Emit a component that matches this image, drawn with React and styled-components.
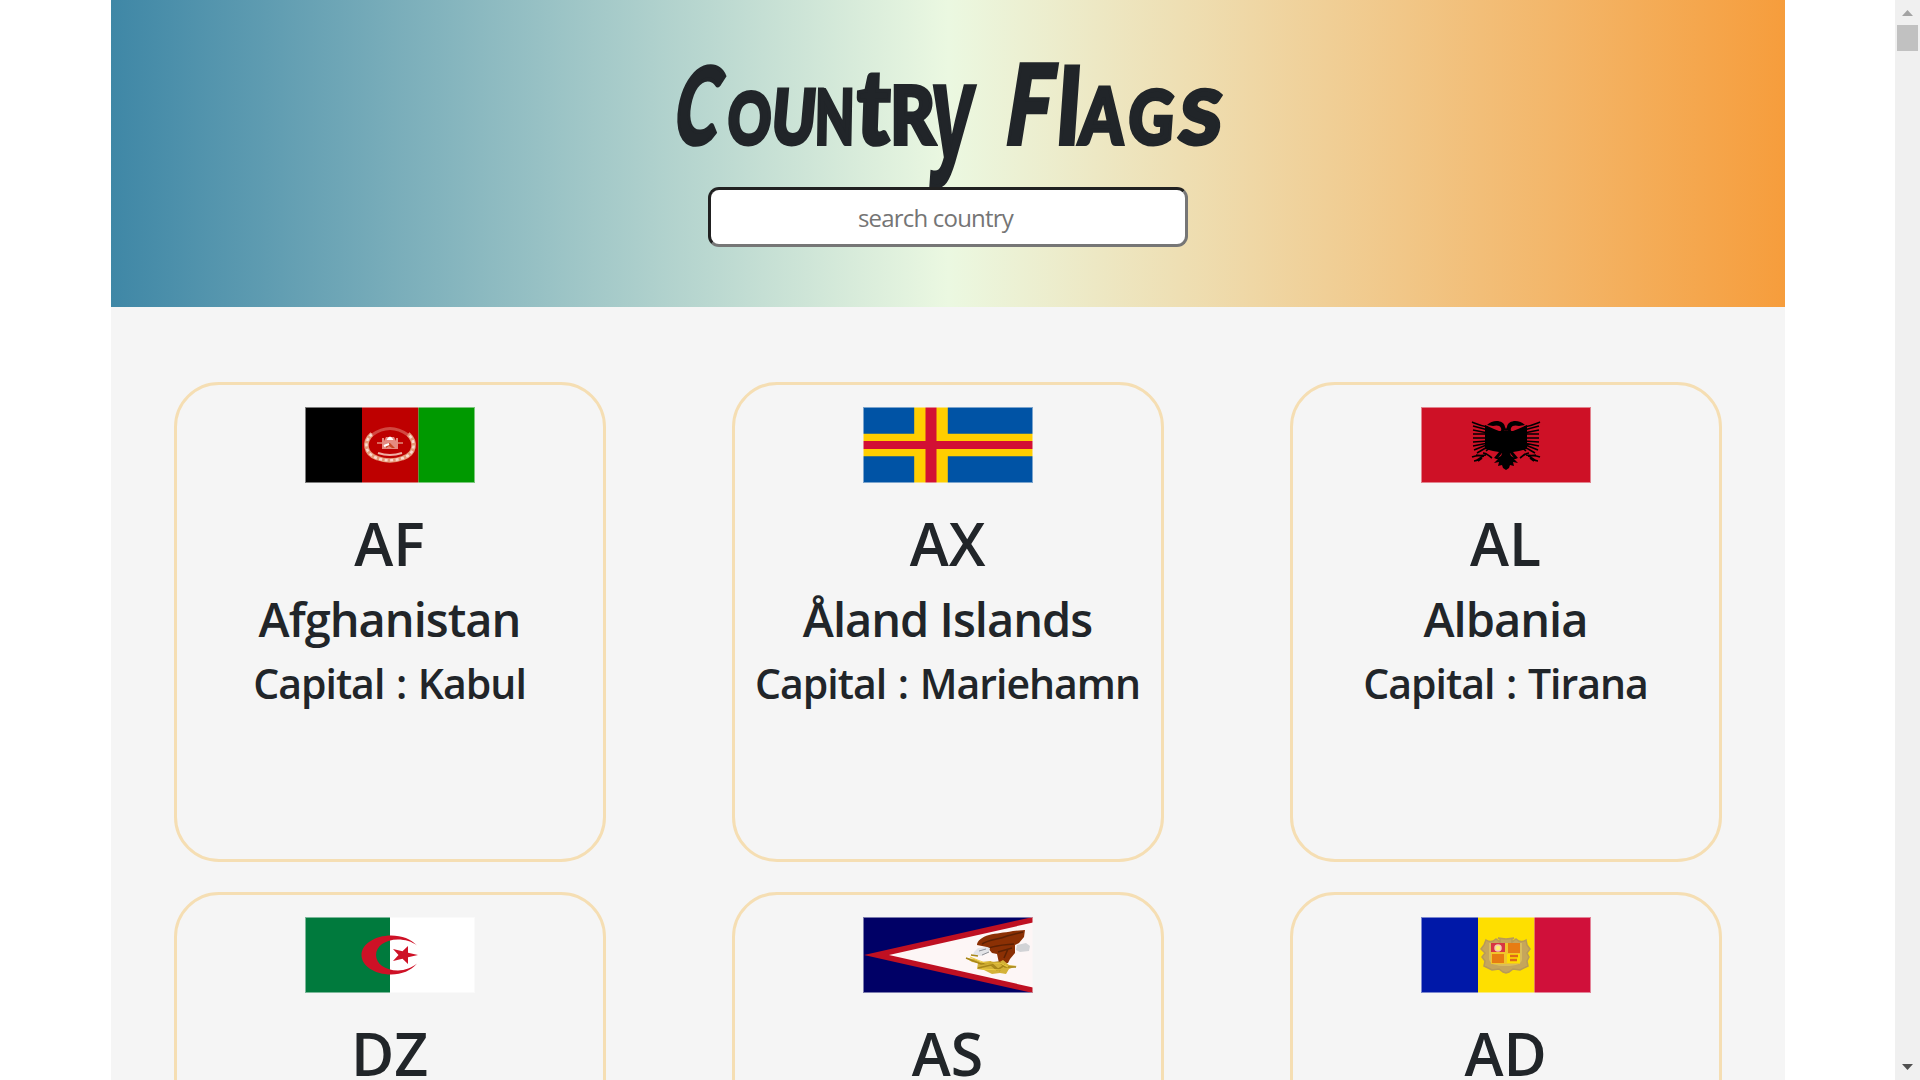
import React from "react";
import styled, { createGlobalStyle } from "styled-components";

const GlobalStyle = createGlobalStyle`
  * { box-sizing: border-box; }
  html, body { margin: 0; padding: 0; overflow: hidden; background: #fff; }
  body { color: #212529; font-family: "Open Sans", "Noto Sans", sans-serif; }
`;

const Page = styled.div`
  display: flex;
  width: 100%;
  height: 1080px;
  overflow: hidden;
`;

const Viewport = styled.main`
  flex: 1;
  display: flex;
  justify-content: center;
  min-width: 0;
`;

const Container = styled.div`
  width: 1674px;
  height: 1080px;
  overflow: hidden;
  background: #f5f5f5;
`;

const Header = styled.header`
  display: flex;
  flex-direction: column;
  align-items: center;
  height: 307px;
  background: linear-gradient(to right, #3f87a6, #ebf8e1, #f69d3c);
`;

const Title = styled.h1`
  display: flex;
  align-items: baseline;
  justify-content: flex-start;
  width: 545px;
  height: 147px;
  margin: 40px 0 0 5px;
  padding-top: 20px;
  font-family: "Lato", sans-serif;
  font-weight: 900;
  line-height: 75px;
  white-space: pre;
`;

const Letter = styled.span`
  display: flex;
  justify-content: center;
  flex: none;
  width: ${(p) => p.$width}px;
  font-family: ${(p) => (p.$hooked ? '"Liberation Sans"' : '"Lato"')}, sans-serif;
  font-size: ${(p) => p.$size}px;
  text-transform: ${(p) => (p.$upper ? "uppercase" : "none")};
  transform: translate(${(p) => p.$shift || 0}px, ${(p) => p.$drop || 0}px) rotate(${(p) => p.$tilt || 0}deg)
    skewX(${(p) => p.$lean}deg) scaleX(${(p) => p.$stretch});
  transform-origin: 50% 70%;
  -webkit-text-stroke: 4px #212529;
`;

const SearchInput = styled.input`
  position: relative;
  width: 480px;
  height: 60px;
  padding: 0 24px 0 0;
  border: 3px solid #767676;
  border-color: #212121 #767676 #767676 #212121;
  border-radius: 11px;
  background: #fff;
  font: 400 24px "Open Sans", "Noto Sans", sans-serif;
  letter-spacing: -0.8px;
  text-align: center;
  outline: none;
  &::placeholder { color: #757575; opacity: 1; }
`;

const Grid = styled.section`
  display: grid;
  grid-template-columns: repeat(3, 558px);
  row-gap: 30px;
  justify-items: center;
  padding-top: 75px;
`;

const Card = styled.article`
  display: flex;
  flex-direction: column;
  align-items: center;
  width: 432px;
  height: 480px;
  padding-top: 22px;
  border: 3px solid #f5deb3;
  border-radius: 45px;
`;

const Flag = styled.svg`
  display: block;
  width: 170px;
  height: 76px;
  margin-bottom: 30px;
`;

const Code = styled.h1`
  margin: 0 0 19px;
  font-size: 59px;
  font-weight: 600;
  line-height: 60px;
`;

const Name = styled.h2`
  margin: 0 0 14px;
  font-size: 47px;
  font-weight: 600;
  line-height: 54px;
  letter-spacing: -1px;
  white-space: nowrap;
`;

const Capital = styled.h3`
  margin: 0;
  font-size: 41px;
  font-weight: 600;
  line-height: 46px;
  letter-spacing: -1px;
  word-spacing: 2px;
  white-space: nowrap;
`;

const Scrollbar = styled.aside`
  display: flex;
  flex-direction: column;
  align-items: center;
  justify-content: space-between;
  width: 25px;
  height: 1080px;
  background: #f0f0f0;
`;

const Track = styled.div`
  flex: 1;
  width: 21px;
`;

const Thumb = styled.div`
  height: 26px;
  background: #c1c1c1;
`;

const ArrowButton = styled.svg`
  display: block;
  width: 25px;
  height: 25px;
`;

const TITLE = [
  { ch: "C", width: 48, size: 106, stretch: 0.62, lean: -10, shift: -5 },
  { ch: "o", width: 46, size: 71, stretch: 0.75, lean: -3, upper: true },
  { ch: "u", width: 42, size: 75, stretch: 0.78, lean: -5, upper: true },
  { ch: "n", width: 41, size: 75, stretch: 0.68, lean: -1, upper: true },
  { ch: "t", width: 36, size: 104, stretch: 0.85, lean: -2 },
  { ch: "r", width: 43, size: 80, stretch: 0.86, lean: 0, upper: true },
  { ch: "y", width: 42, size: 136, stretch: 0.56, lean: -4, drop: 14, shift: -3, hooked: true },
  { ch: " ", width: 32, size: 60, stretch: 1, lean: 0 },
  { ch: "F", width: 50, size: 110, stretch: 0.72, lean: -9, shift: -4 },
  { ch: "l", width: 19, size: 104, stretch: 0.85, lean: -4, shift: 1 },
  { ch: "a", width: 49, size: 78, stretch: 0.8, lean: -4, upper: true },
  { ch: "g", width: 49, size: 74, stretch: 0.84, lean: -4, upper: true },
  { ch: "s", width: 49, size: 74, stretch: 1.02, lean: -6, upper: true },
];

const Afghanistan = () => (
  <>
    <rect width="57" height="76" fill="#000" />
    <rect x="57" width="56.5" height="76" fill="#be0000" />
    <rect x="113.5" width="56.5" height="76" fill="#090" />
    <g fill="none">
      <path d="M67 27C58 35 60 47 72 51c8 3 18 3 26 0 12-4 14-16 5-24" stroke="#e59a78" strokeWidth="4.5" />
      <path d="M67 27C58 35 60 47 72 51c8 3 18 3 26 0 12-4 14-16 5-24" stroke="#fbd9d0" strokeWidth="2.5" strokeDasharray="3 2.5" />
      <path d="M67 28q18-13 36 0" stroke="#d9685c" strokeWidth="3" opacity=".7" />
      <path d="M73 46q12 4 24 0" stroke="#f0b0a4" strokeWidth="2" />
      <path d="M72 36h5M93 36h5" stroke="#d9685c" strokeWidth="2" />
    </g>
    <path d="M77 42V31h2v3l2-4h8l2 4v-3h2v11z" fill="#e58a80" />
    <path d="M81.500 33q3.500-7 7 0z" fill="#fff" />
    <path d="m81 37 4-1 5 5-3 0-3-2-3 2z" fill="#c84726" />
    <path d="M79 39l5-2" stroke="#fff" strokeWidth="2" />
  </>
);

const Aland = () => (
  <>
    <rect width="170" height="76" fill="#0053a5" />
    <path d="M51.200 0h33.600v76H51.200zM0 26.700h170v22.600H0z" fill="#ffce00" />
    <path d="M62.500 0h11v76h-11zM0 34.100h170v8H0z" fill="#d21034" />
  </>
);

const Wing = () => (
  <>
    <path d="M85 24c-2-1-5 1-6 2l-2-2c2 1 4 0 3-3-1-3-5-3-8-2l-6-1c6-6 17-5 18 2l1 2z" />
    <path d="M85 24h-7l-5-2-9-4v24l8 2 6 1-5 6 3 1 5-6h4z" />
    <path d="M80 49l-6 3 3 0-4 4 5-1-1 4 4-1 1 3 3 2V44h-3z" />
    <path
      fill="none"
      stroke="#000"
      strokeWidth="1.600"
      d="M51 15c5 2 9 4 16 5M52 19l15 4M52 23l15 3M52 27h15M52 31h15M52 35l15-1M52 39l15-3M53 43l15-6M56 46l12-7M65 44l5-4M62 46c4 0 6 3 9 5M51 50c5-2 9-1 14-2M53 54c5 0 5-4 10-5M57 54l4-3M55 48l6 1"
    />
  </>
);

const Albania = () => (
  <>
    <rect width="170" height="76" fill="#ce1126" />
    <Wing />
    <g transform="translate(170 0) scale(-1 1)">
      <Wing />
    </g>
  </>
);

const Algeria = () => (
  <>
    <rect width="85" height="76" fill="#007a3d" />
    <rect x="85" width="85" height="76" fill="#fff" />
    <path
      d="M112 28.500C106 22 97 18.500 86 18.500c-16 0-29.500 8.500-29.500 19.500S70 57.500 86 57.500c11 0 20-4 26-11-5 4-12 7-19 7-13 0-22-7-22-15.500S80 22.500 93 22.500c7 0 14 2 19 6z"
      fill="#ce1126"
    />
    <path d="M113 38l-10 2.300V47l-5.500-5.300-9.500 2.300 5.500-6-5.500-6 9.500 2.300L103 29v6.700z" fill="#ce1126" />
  </>
);

const AmericanSamoa = () => (
  <>
    <rect width="170" height="76" fill="#006" />
    <path d="M1 38 170 0v76z" fill="#bf1022" />
    <path d="M26 38 170 5.500v65z" fill="#fdf6f6" />
    <path d="M114 28c0-4 5-8 12-10 8-2 14-2 24-4l12-1-1 7-5 6-4 2v8l-5 6-2 4h-9l-2-9-5-1-5-6z" fill="#8b3004" />
    <path d="M119 27c8-5 16-4 25-8l16-4M126 31c8-3 15-3 25-4M135 35l14-4M141 41l4-9" fill="none" stroke="#5c2104" strokeWidth="1.500" />
    <path d="m154 28 9-2 4 3-1 5-9 1-4-2z" fill="#d2d3d6" />
    <path d="m111 35 4-4 9-1 3 1-1 4-7 4-9-1z" fill="#e3e4e8" />
    <path d="m116 34 7-2M119 38l7-3" stroke="#8e9097" />
    <path d="m103 41 9 1 6 3 9-1 8 2 5-3 6 5 8 1-8 3-3 5-6-1-8 1-8-4-7-1 1-6-6-1z" fill="#d4b238" />
    <path d="m103 41 15 6 18-2 6 5h11M115 51l13-3 6 5 8-5M127 45l10 9M108 38l7 1" fill="none" stroke="#a78619" strokeWidth="1.500" />
    <path d="m107 40 15 6 15 0 8 4M119 52l18 1" fill="none" stroke="#f0ce42" />
  </>
);

const Andorra = () => (
  <>
    <rect width="57" height="76" fill="#0018a8" />
    <rect x="57" width="56.500" height="76" fill="#fedf00" />
    <rect x="113.500" width="56.500" height="76" fill="#d0103a" />
    <path
      d="M65 23c3 2 7 2 10-1l4 3 0-3-2-1 8 1 8-1-2 1 0 3 4-3c3 3 7 3 10 1l1 5 3 4-3 4 2 4-2 4 1 5-8 4-7-1-4 3-3 1-3-1-4-3-7 1-8-4 1-5-3-4 3-4-4-4 3-4z"
      fill="#c6a65b"
      stroke="#b89a58"
      strokeWidth="1.500"
    />
    <path d="M69 26v16q1 6 16 6 15 0 15-6V26" fill="none" stroke="#d9bd5c" strokeWidth="2" />
    <rect x="70" y="26" width="29" height="21" fill="#f0c52c" />
    <rect x="70" y="26" width="14" height="9" fill="#d83542" />
    <circle cx="77" cy="31" r="3" fill="#fff071" stroke="#f4cab0" strokeWidth="1.500" />
    <path d="M87 26h12v10H87zM71 37h12v9H71z" fill="#e77c12" />
    <path d="M86 37h13v9H86z" fill="#fedf00" />
    <path d="M89 39h8M89 43h7" stroke="#dd6a1a" strokeWidth="2.500" />
  </>
);

const COUNTRIES = [
  { code: "AF", name: "Afghanistan", capital: "Kabul", Drawing: Afghanistan },
  { code: "AX", name: "Åland Islands", capital: "Mariehamn", Drawing: Aland },
  { code: "AL", name: "Albania", capital: "Tirana", Drawing: Albania },
  { code: "DZ", Drawing: Algeria },
  { code: "AS", Drawing: AmericanSamoa },
  { code: "AD", Drawing: Andorra },
];

export default function App() {
  return (
    <>
      <GlobalStyle />
      <Page>
        <Viewport>
          <Container>
            <Header>
              <Title>
                {TITLE.map((l, i) => (
                  <Letter
                    key={i}
                    $width={l.width}
                    $size={l.size}
                    $stretch={l.stretch}
                    $lean={l.lean}
                    $upper={l.upper}
                    $drop={l.drop}
                    $shift={l.shift}
                    $hooked={l.hooked}
                  >
                    {l.ch}
                  </Letter>
                ))}
              </Title>
              <SearchInput placeholder="search country" />
            </Header>
            <Grid>
              {COUNTRIES.map(({ code, name, capital, Drawing }) => (
                <Card key={code}>
                  <Flag viewBox="0 0 170 76">
                    <Drawing />
                    <rect x="0.500" y="0.500" width="169" height="75" fill="none" stroke="#f5f5f5" strokeOpacity="0.500" />
                  </Flag>
                  <Code>{code}</Code>
                  {name && <Name>{name}</Name>}
                  {capital && <Capital>Capital : {capital}</Capital>}
                </Card>
              ))}
            </Grid>
          </Container>
        </Viewport>
        <Scrollbar>
          <ArrowButton viewBox="0 0 25 25">
            <path d="M7 16h11l-5.500-6z" fill="#a3a3a3" />
          </ArrowButton>
          <Track>
            <Thumb />
          </Track>
          <ArrowButton viewBox="0 0 25 25">
            <path d="M7 9h11l-5.500 6z" fill="#505050" />
          </ArrowButton>
        </Scrollbar>
      </Page>
    </>
  );
}
